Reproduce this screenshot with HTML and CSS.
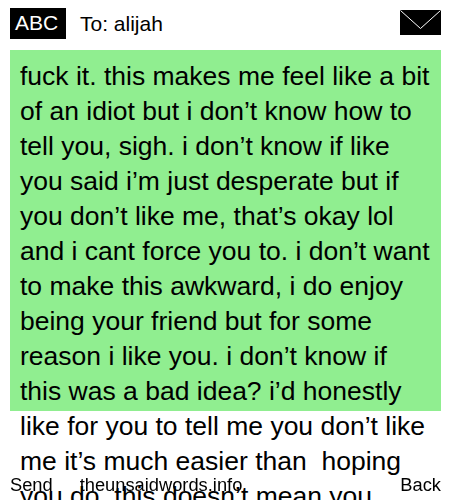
FILE: index.html

```html
<!DOCTYPE html>
<html>
<head>
  <title>theunsaidwords.info</title>
  <meta name="viewport" content="width=device-width, initial-scale=1.0" />
  <link rel="stylesheet" href="styles.css">
</head>
<body>
  <header class="top">
    <span class="mode">ABC</span>
    <span class="to">To: alijah</span>
    <svg class="envelope" width="41" height="25" viewBox="0 0 41 25">
      <rect width="41" height="25" fill="#000" />
      <path d="M0.5 0.5 L20.5 18.5 L40.5 0.5" fill="none" stroke="#fff" stroke-width="1" />
    </svg>
  </header>

  <div class="message">fuck it. this makes me feel like a bit of an idiot but i don’t know how to tell you, sigh. i don’t know if like you said i’m just desperate but if you don’t like me, that’s okay lol and i cant force you to. i don’t want to make this awkward, i do enjoy being your friend but for some reason i like you. i don’t know if this was a bad idea? i’d honestly like for you to tell me you don’t like me it’s much easier than &nbsp;hoping you do, this doesn’t mean you</div>

  <footer class="bottom">
    <span class="send">Send</span>
    <span class="site">theunsaidwords.info</span>
    <span class="back">Back</span>
  </footer>
</body>
</html>
```

FILE: styles.css

```css
html, body { height: 500px; overflow: hidden; }
body { margin: 0; padding: 8px 9px 0 10px; background: #fff; color: #000; font-family: "Liberation Sans", Arial, sans-serif; box-sizing: border-box; }
.top { display: flex; align-items: center; height: 31px; margin-bottom: 11px; }
.mode { width: 56px; height: 31px; box-sizing: border-box; padding-right: 3px; line-height: 30px; background: #000; color: #fff; font-size: 21px; text-align: center; }
.to { margin-left: 14px; font-size: 21px; }
.envelope { display: block; margin-left: auto; margin-top: -3px; }
.message { height: 361px; box-sizing: border-box; padding: 9px 10px 0; background: #90ee90; font-size: 26.5px; line-height: 35px; }
.bottom { position: fixed; left: 10px; right: 9px; bottom: 5px; display: flex; font-size: 18.3px; line-height: 21px; }
.site { margin-left: 27px; }
.back { margin-left: auto; }
```
